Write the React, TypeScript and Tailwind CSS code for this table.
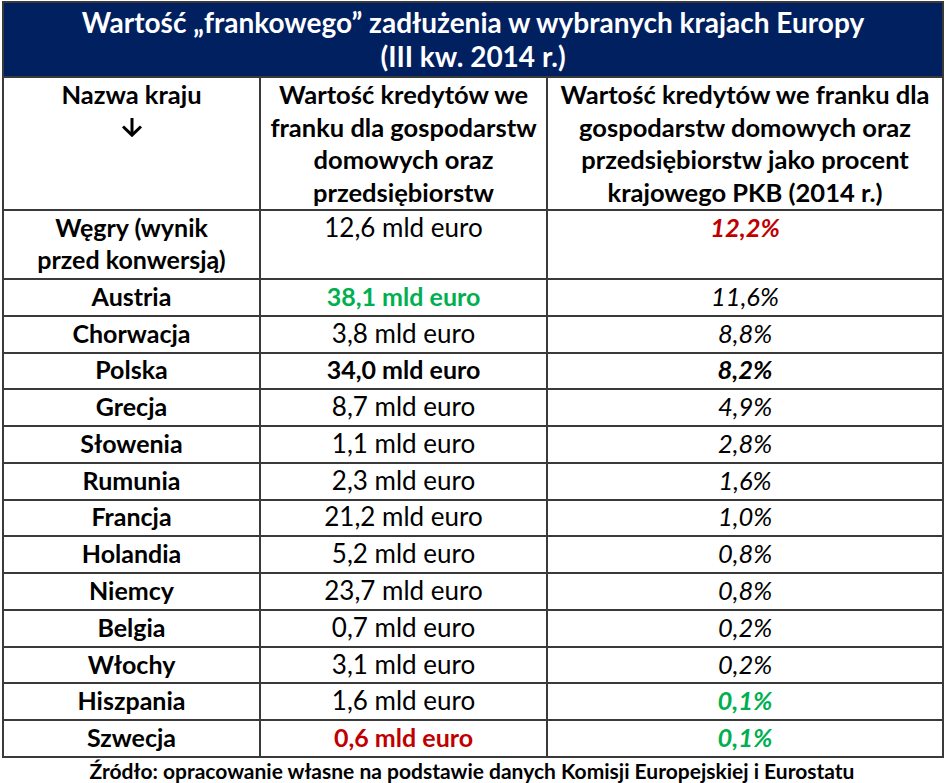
import React from "react";

type Row = {
  name: string;
  val: string;
  pct: string;
  valCls?: string;
  pctCls?: string;
};

const rows: Row[] = [
  { name: "Austria", val: "38,1 mld euro", pct: "11,6%", valCls: "font-bold text-[#00b050] text-[25px]" },
  { name: "Chorwacja", val: "3,8 mld euro", pct: "8,8%" },
  { name: "Polska", val: "34,0 mld euro", pct: "8,2%", valCls: "font-bold text-[25px]", pctCls: "font-bold" },
  { name: "Grecja", val: "8,7 mld euro", pct: "4,9%" },
  { name: "Słowenia", val: "1,1 mld euro", pct: "2,8%" },
  { name: "Rumunia", val: "2,3 mld euro", pct: "1,6%" },
  { name: "Francja", val: "21,2 mld euro", pct: "1,0%" },
  { name: "Holandia", val: "5,2 mld euro", pct: "0,8%" },
  { name: "Niemcy", val: "23,7 mld euro", pct: "0,8%" },
  { name: "Belgia", val: "0,7 mld euro", pct: "0,2%" },
  { name: "Włochy", val: "3,1 mld euro", pct: "0,2%" },
  { name: "Hiszpania", val: "1,6 mld euro", pct: "0,1%", pctCls: "font-bold text-[#00b050]" },
  { name: "Szwecja", val: "0,6 mld euro", pct: "0,1%", valCls: "font-bold text-[#c00000] text-[25px]", pctCls: "font-bold text-[#00b050]" },
];

const bd = "border-2 border-[#3a3a3a]";

export default function App() {
  return (
    <div
      className="w-[945px] h-[783px] overflow-hidden bg-white pl-[2px] pt-[1px] text-black"
      style={{ fontFamily: "Lato, 'Noto Sans', sans-serif" }}
    >
      <table className="border-collapse table-fixed w-[940px]">
        <colgroup>
          <col className="w-[257px]" />
          <col className="w-[287px]" />
          <col className="w-[396px]" />
        </colgroup>
        <thead>
          <tr className="h-[75px]">
            <th
              colSpan={3}
              className={`bg-[#002060] text-white font-bold text-[28px] leading-[34px] ${bd} align-middle p-0 pb-[2px]`}
            >
              Wartość „frankowego” zadłużenia w wybranych krajach Europy
              <br />
              (III kw. 2014 r.)
            </th>
          </tr>
          <tr className="h-[133px] text-[25.5px] leading-[32.5px] font-bold">
            <th className={`${bd} align-top p-0 font-bold`}>
              Nazwa kraju
              <div className="flex h-[32.5px] items-center justify-center pt-[1px]">
                <svg
                  width="22"
                  height="19"
                  className="block shrink-0"
                  viewBox="0 0 22 19"
                  fill="none"
                  stroke="#000"
                  strokeWidth="3"
                >
                  <path d="M11 0 V17" />
                  <path d="M2 8.5 L11 17.2 L20 8.5" />
                </svg>
              </div>
            </th>
            <th className={`${bd} align-top p-0 font-bold`}>
              Wartość kredytów we
              <br />
              franku dla gospodarstw
              <br />
              domowych oraz
              <br />
              przedsiębiorstw
            </th>
            <th className={`${bd} align-top p-0 font-bold`}>
              Wartość kredytów we franku dla
              <br />
              gospodarstw domowych oraz
              <br />
              przedsiębiorstw jako procent
              <br />
              krajowego PKB (2014 r.)
            </th>
          </tr>
        </thead>
        <tbody className="text-[26px]">
          <tr className="h-[69px]">
            <td className={`${bd} p-0 align-top text-center font-bold text-[25px] leading-[32px]`}>
              Węgry (wynik
              <br />
              przed konwersją)
            </td>
            <td className={`${bd} p-0 align-top text-center leading-[32px]`}>
              12,6 mld euro
            </td>
            <td className={`${bd} p-0 align-top text-center text-[25.5px] leading-[32px] italic font-bold text-[#c00000]`}>
              12,2%
            </td>
          </tr>
          {rows.map((r) => (
            <tr key={r.name} className="h-[36.77px]">
              <td className={`${bd} p-0 pb-[2px] text-center font-bold text-[25px] leading-[29px]`}>
                {r.name}
              </td>
              <td className={`${bd} p-0 pb-[2px] text-center leading-[29px] ${r.valCls ?? ""}`}>
                {r.val}
              </td>
              <td className={`${bd} p-0 pb-[2px] text-center text-[25.5px] leading-[29px] italic ${r.pctCls ?? ""}`}>
                {r.pct}
              </td>
            </tr>
          ))}
        </tbody>
      </table>
      <div className="w-[940px] text-center font-bold text-[21px] leading-[26px]">
        Źródło: opracowanie własne na podstawie danych Komisji Europejskiej i Eurostatu
      </div>
    </div>
  );
}
